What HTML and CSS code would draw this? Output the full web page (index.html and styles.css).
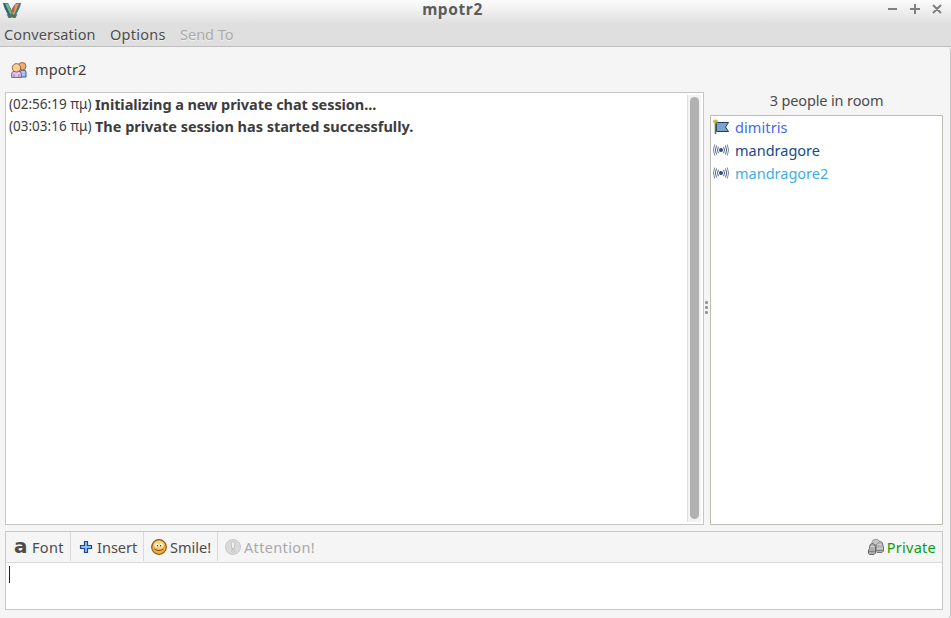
FILE: index.html
```html
<!DOCTYPE html>
<html lang="en">
<head>
<meta charset="utf-8">
<title>mpotr2</title>
<link rel="stylesheet" href="styles.css">
</head>
<body>
<svg class="defs" width="0" height="0">
  <symbol id="signal" viewBox="0 0 16 16">
    <circle cx="8" cy="8" r="2" fill="#304b7c"/>
    <g fill="none" stroke="#4d6190" stroke-width="1">
      <path d="M5.4 4.8Q3.6 8 5.4 11.2M10.6 4.8Q12.4 8 10.6 11.2"/>
      <path d="M3.5 3.5Q1.2 8 3.5 12.5M12.5 3.5Q14.8 8 12.5 12.5"/>
      <path d="M1.7 2.5Q-.8 8 1.7 13.5M14.3 2.5Q16.8 8 14.3 13.5" stroke="#7887ac"/>
    </g>
  </symbol>
</svg>
<div class="window">
  <header class="chrome">
    <div class="titlebar">
      <svg class="logo" width="18" height="16" viewBox="0 0 18 16">
        <path d="M0 0h5l4 8v5H6Q1 6 0 0z" fill="#286575"/>
        <path d="M2 .5h3l4 9.500-1.500 2z" fill="#7ab58a"/>
        <path d="M18 0h-5L9 6v7h3Q17 6 18 0z" fill="#397e81"/>
        <path d="M16 .5l-4 .5-3 10 2 1z" fill="#e29a62"/>
        <path d="M12 1l-2.500 4-.5 7 2.500-5z" fill="#bd5e49"/>
        <path d="M3.500 11l3.500 1 2-1 2 1 3.500-1-2 4H10l-1-1-1 1H5.500z" fill="#52715f"/>
      </svg>
      <h1 class="title">mpotr2</h1>
      <svg class="controls" width="56" height="12" viewBox="0 0 56 12" fill="none" stroke="#808080" stroke-width="2">
        <path d="M1 5h9M23 5h10M28 0v10M46 1l8 8M54 1l-8 8"/>
      </svg>
    </div>
    <nav class="menu">
      <span class="m-conv">Conversation</span><span class="m-opt">Options</span><span class="m-send">Send To</span>
    </nav>
  </header>
  <main class="body">
    <div class="tab">
      <svg width="16" height="16" viewBox="0 0 16 16">
        <path d="M9 15V10q0-2 3-2t3 2v5z" fill="#a9c5ef" stroke="#3c539b"/>
        <circle cx="11.2" cy="4.3" r="3.8" fill="#e9b16c" stroke="#8b5a32" stroke-width=".9"/>
        <path d="M.7 15.4v-4q0-2.2 4.8-2.2t4.8 2.2v4z" fill="#e4c6e8" stroke="#815491"/>
        <path d="M3 12v3M8 12v3" stroke="#a27bad"/>
        <circle cx="5.5" cy="5.8" r="4.2" fill="#f6cf9b" stroke="#8b5a32" stroke-width=".9"/>
      </svg>
      <span class="room">mpotr2</span>
    </div>
    <div class="panes">
      <section class="chat">
        <div class="log">
          <p><span class="time">(02:56:19 πμ)</span><b class="msg1">Initializing a new private chat session...</b></p>
          <p><span class="time">(03:03:16 πμ)</span><b class="msg2">The private session has started successfully.</b></p>
        </div>
        <div class="scroll"><div class="thumb"></div></div>
      </section>
      <div class="grip"><i></i><i></i><i></i></div>
      <aside class="people">
        <div class="count"><span>3 people in room</span></div>
        <ul class="list">
          <li><svg width="16" height="16" viewBox="0 0 16 16"><path d="M3.5 3.5h12L12.5 8l3 4.5h-12z" fill="#79a4ce" stroke="#1d3d61"/><path d="M2.5 2v13" stroke="#55764a" stroke-width="1.6"/><path d="M0 2.5h5M2.5 .5v4" stroke="#c3b52b" stroke-width="1.8"/></svg><span class="p1">dimitris</span></li>
          <li><svg width="16" height="16"><use href="#signal"/></svg><span class="p2">mandragore</span></li>
          <li><svg width="16" height="16"><use href="#signal"/></svg><span class="p3">mandragore2</span></li>
        </ul>
      </aside>
    </div>
    <section class="compose">
      <div class="tools">
        <div class="tool t-font"><b class="a">a</b><span>Font</span></div>
        <div class="tool t-insert"><svg width="14" height="14" viewBox="0 0 14 14"><path d="M5.5 1.500h3v4h4v3h-4v4h-3v-4h-4v-3h4z" fill="#8dc1f4" stroke="#1f4790" stroke-width="1.2"/></svg><span>Insert</span></div>
        <div class="tool t-smile"><svg width="16" height="16" viewBox="0 0 16 16"><circle cx="8" cy="8" r="7.3" fill="#efb044" stroke="#885719" stroke-width="1.2"/><ellipse cx="8" cy="5.8" rx="5.3" ry="4" fill="#f8d37c"/><ellipse cx="5.9" cy="6.3" rx="1.6" ry="2" fill="#fffbe8"/><ellipse cx="10.1" cy="6.3" rx="1.6" ry="2" fill="#fffbe8"/><path d="M5.9 6h1.1v1.6H5.9zM9.1 6h1.1v1.6H9.1z" fill="#4e3517"/><path d="M3.5 10q4.500 3.200 9 0" fill="none" stroke="#8b4e14"/></svg><span>Smile!</span></div>
        <div class="tool t-att"><svg width="16" height="16" viewBox="0 0 16 16"><circle cx="8" cy="8" r="7.5" fill="#dadada" stroke="#c8c8c8"/><path d="M6 3.500q2-1.500 4 0L9.200 9.500H6.800zM6.800 11h2.400v2H6.800z" fill="#f3f3f3" stroke="#b8b8b8" stroke-width=".8"/></svg><span>Attention!</span></div>
        <div class="private"><svg width="16" height="16" viewBox="0 0 16 16"><path d="M8 12.500V5.500Q8 2.500 11 2.500h1.500q2.500.5 2.500 4l.5 1V12l-1.500 1.500H9z" fill="#b5b5b5" stroke="#737373"/><path d="M4 5V3Q4.500.5 7 .5h2q2 .5 2.500 2L8 6z" fill="#c9c9c9" stroke="#888" stroke-width=".8"/><path d="M.5 14.500V11L1.500 9.500V7.500Q2 4.500 4.500 4.500t3 3.500v6l-1.500 1.500H1.500z" fill="#adadad" stroke="#6b6b6b"/><path d="M2.500 7.500h4M9.500 5.500h4M9 9.500h6" stroke="#d2d2d2"/><path d="M1 12.500h6M8.500 11.500h6.500" stroke="#828282"/></svg><span>Private</span></div>
      </div>
      <div class="entry"><div class="caret"></div></div>
    </section>
  </main>
</div>
</body>
</html>
```
FILE: styles.css
```css
* { box-sizing: border-box; }
body { margin: 0; width: 951px; height: 618px; overflow: hidden; background: #fff; font: 14.5px/20px "Noto Sans", "Open Sans", sans-serif; color: #3c3c3c; }
.defs { position: absolute; }
svg { flex: none; display: block; }
span, b { white-space: nowrap; }
.window { height: 618px; display: flex; flex-direction: column; }
.chrome { height: 47px; flex: none; background: linear-gradient(#fcfcfc, #dfdfdf 24px, #dfdfdf); border-bottom: 1px solid #bebebe; }
.titlebar { height: 24px; display: grid; grid-template-columns: 60px 1fr 101px; padding: 0 8px 0 3px; }
.logo { margin-top: 3px; }
.title { margin: 0; font-size: 15.5px; line-height: 18px; letter-spacing: .6px; font-weight: 700; color: #5c5c5c; text-align: center; }
.controls { justify-self: end; margin-top: 4px; }
.menu { display: flex; padding: 0 4px; line-height: 21px; color: #4c4c4c; text-shadow: 0 1px #f0f0f0; }
.m-conv { width: 106px; letter-spacing: .12px; }
.m-opt { width: 70px; letter-spacing: .25px; }
.m-send { color: #aaa; }
.body { flex: 1; background: #f5f5f5; border-right: 1px solid #c5c5c5; border-bottom: 1px solid #c5c5c5; border-radius: 0 4px 4px 0; display: flex; flex-direction: column; padding: 0 7px 8px 5px; }
.tab { height: 45px; display: flex; align-items: center; gap: 8px; padding-left: 6px; }
.room { margin-top: -2px; letter-spacing: .1px; }
.panes { height: 433px; display: flex; }
.chat { width: 699px; background: #fff; border: 1px solid #c8c5c2; display: flex; }
.log { flex: 1; padding: 0 0 0 3px; }
.log p { margin: 0; height: 22px; line-height: 22px; display: flex; }
.time { width: 86px; font-size: 13.5px; }
.msg1 { letter-spacing: -.08px; }
.msg2 { letter-spacing: -.02px; }
.scroll { width: 14px; margin: 2px 2px 2px 0; border-left: 1px solid #ddd; background: #f3f3f3; padding: 2px 2px 3px 2px; }
.thumb { height: 100%; width: 9px; border-radius: 4.5px; background: #b1b1b1; }
.grip { width: 6px; display: flex; flex-direction: column; justify-content: center; align-items: center; gap: 2px; padding: 0 1px 3px 0; }
.grip i { width: 3px; height: 3px; border-radius: 1px; background: #969696; }
.people { width: 233px; display: flex; flex-direction: column; }
.count { height: 23px; line-height: 16px; text-align: center; color: #4c4c4c; letter-spacing: -.13px; }
.list { flex: 1; margin: 0; padding: 0 0 0 2px; list-style: none; background: #fff; border: 1px solid #bdbdb5; }
.list li { height: 23px; display: flex; align-items: center; gap: 6px; }
.list svg { margin-top: -2px; }
.list span { margin-top: -2px; }
.p1 { color: #4169f1; letter-spacing: .1px; }
.p2 { color: #204a87; }
.p3 { color: #3daee9; }
.compose { margin-top: 6px; height: 79px; width: 938px; background: #fff; border: 1px solid #c8c8c8; display: flex; flex-direction: column; }
.tools { height: 31px; background: #f5f5f5; border-bottom: 1px solid #d9d9d9; display: flex; color: #4c4c4c; }
.tool { height: 29px; display: flex; align-items: center; border-right: 1px solid #dadada; padding-top: 2px; }
.tools span { margin-top: -2px; }
.tools svg { margin-top: -1px; }
.t-font { width: 65px; padding-left: 8px; letter-spacing: .3px; }
.a { width: 18px; font: bold 20px/18px "DejaVu Sans", sans-serif; margin-top: -4px; }
.t-insert { width: 73px; padding-left: 8px; gap: 4px; }
.t-smile { width: 74px; padding-left: 7px; gap: 3px; }
.t-att { padding-left: 7px; gap: 3px; border: 0; color: #a9a9a9; letter-spacing: .35px; }
.private { margin-left: auto; height: 29px; display: flex; align-items: center; gap: 3px; padding: 2px 6px 0 0; color: #0a9e0a; letter-spacing: .25px; }
.entry { padding: 3px; }
.caret { width: 1px; height: 17px; background: #222; }
```
